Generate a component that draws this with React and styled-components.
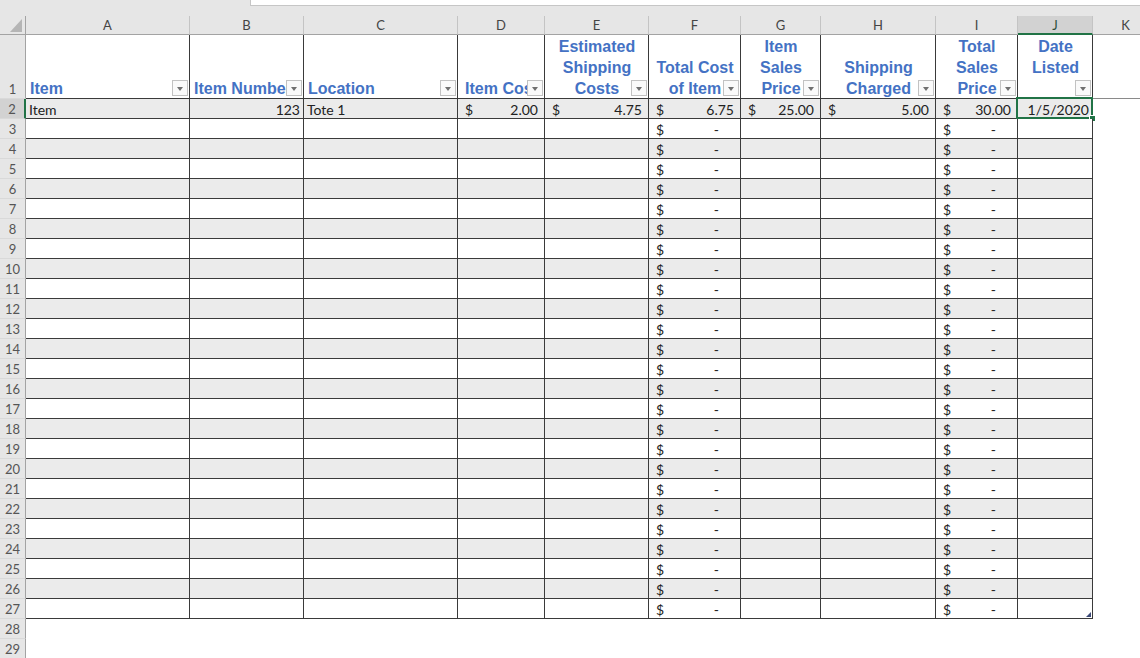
import React from "react";
import styled, { createGlobalStyle, css } from "styled-components";

const GREEN = "#217346";
const LINE = "#3a3a3a";
const HEAD_BG = "#e6e6e6";
const HEAD_LINE = "#a3a3a3";
const BAND = "#ebebeb";
const BLUE = "#4472c4";

const Global = createGlobalStyle`
  html, body { margin: 0; padding: 0; background: #ffffff; overflow: hidden; }
  body { font-family: Lato, "Open Sans", sans-serif; }
`;

const COLS = [
  { key: "A", w: 164 },
  { key: "B", w: 114 },
  { key: "C", w: 154 },
  { key: "D", w: 87 },
  { key: "E", w: 104 },
  { key: "F", w: 92 },
  { key: "G", w: 80 },
  { key: "H", w: 115 },
  { key: "I", w: 82 },
  { key: "J", w: 75 },
];

const HEADERS = [
  { lines: ["Item"], align: "left" },
  { lines: ["Item Number"], align: "left" },
  { lines: ["Location"], align: "left" },
  { lines: ["Item Cost"], align: "center" },
  { lines: ["Estimated", "Shipping", "Costs"], align: "center" },
  { lines: ["Total Cost", "of Item"], align: "center" },
  { lines: ["Item", "Sales", "Price"], align: "center" },
  { lines: ["Shipping", "Charged"], align: "center" },
  { lines: ["Total", "Sales", "Price"], align: "center" },
  { lines: ["Date", "Listed", "\u00a0"], align: "center" },
];

const FIRST_ROW = [
  { type: "text", value: "Item", align: "left" },
  { type: "text", value: "123", align: "right" },
  { type: "text", value: "Tote 1", align: "left" },
  { type: "money", value: "2.00" },
  { type: "money", value: "4.75" },
  { type: "money", value: "6.75" },
  { type: "money", value: "25.00" },
  { type: "money", value: "5.00" },
  { type: "money", value: "30.00" },
  { type: "text", value: "1/5/2020", align: "right", selected: true },
];

const Page = styled.div`
  width: 1140px;
  height: 658px;
  overflow: hidden;
  background: #ffffff;
  display: flex;
  flex-direction: column;
`;

const TopStrip = styled.div`
  height: 16px;
  background: ${HEAD_BG};
  display: flex;
  flex-shrink: 0;
`;

const FormulaEdge = styled.div`
  margin-left: 250px;
  flex: 1;
  height: 5px;
  background: #ffffff;
  border-left: 1px solid #c6c6c6;
  border-bottom: 1px solid #c6c6c6;
`;

const Sheet = styled.div`
  display: grid;
  grid-template-columns: 26px ${COLS.map((c) => `${c.w}px`).join(" ")} 66px;
  grid-template-rows: 19px 64px repeat(28, 20px);
  font-family: Lato, "Open Sans", sans-serif;
  font-size: 14px;
  color: #222;
`;

const Corner = styled.div`
  background: ${HEAD_BG};
  border-right: 1px solid ${HEAD_LINE};
  border-bottom: 1px solid ${HEAD_LINE};
  box-sizing: border-box;
  display: flex;
  align-items: flex-end;
  justify-content: flex-end;
  padding: 0 3px 2px 0;
`;

const ColHead = styled.div`
  box-sizing: border-box;
  background: ${(p) => (p.$active ? "#d2d2d2" : HEAD_BG)};
  border-right: 1px solid ${(p) => (p.$last ? "transparent" : "#c4c4c4")};
  border-bottom: ${(p) => (p.$active ? `2px solid ${GREEN}` : `1px solid ${HEAD_LINE}`)};
  color: ${(p) => (p.$active ? "#2e4f3a" : "#444")};
  font-size: 13px;
  line-height: 19px;
  text-align: center;
`;

const RowHead = styled.div`
  box-sizing: border-box;
  background: ${(p) => (p.$active ? "#d2d2d2" : HEAD_BG)};
  border-right: ${(p) => (p.$active ? `2px solid ${GREEN}` : `1px solid ${HEAD_LINE}`)};
  border-bottom: 1px solid #d9d9d9;
  color: #555;
  font-size: 13px;
  display: flex;
  align-items: flex-end;
  justify-content: center;
  line-height: 18px;
`;

const HeaderCell = styled.div`
  position: relative;
  box-sizing: border-box;
  border-right: 1px solid ${LINE};
  border-bottom: 1px solid ${LINE};
  background: #ffffff;
  overflow: hidden;
  display: flex;
  flex-direction: column;
  justify-content: flex-end;
  padding: 0 3px 0 4px;
  font-family: "Liberation Sans", Arial, sans-serif;
  font-weight: bold;
  font-size: 16px;
  line-height: 21px;
  color: ${BLUE};
  text-align: ${(p) => p.$align};
  white-space: nowrap;
`;

const HeaderText = styled.div`
  margin-bottom: -1px;
`;

const HeaderLine = styled.span`
  display: block;
`;

const FilterButton = styled.span`
  position: absolute;
  right: 1px;
  bottom: 2px;
  width: 16px;
  height: 16px;
  box-sizing: border-box;
  background: #fafafa;
  border: 1px solid #c2c2c2;
  display: flex;
  align-items: center;
  justify-content: center;
  &::after {
    content: "";
    border-left: 3.5px solid transparent;
    border-right: 3.5px solid transparent;
    border-top: 4px solid #707070;
    margin-top: 1px;
  }
`;

const Cell = styled.div`
  position: relative;
  box-sizing: border-box;
  border-right: 1px solid ${LINE};
  border-bottom: 1px solid ${LINE};
  background: ${(p) => (p.$band ? BAND : "#ffffff")};
  line-height: 21px;
  padding: 0 3px;
  text-align: ${(p) => p.$align || "left"};
  white-space: nowrap;
  ${(p) =>
    p.$selected &&
    css`
      &::before {
        content: "";
        position: absolute;
        left: -2px;
        top: -2px;
        right: -1px;
        bottom: -1px;
        border: 2px solid ${GREEN};
        pointer-events: none;
      }
      &::after {
        content: "";
        position: absolute;
        right: -4px;
        bottom: -4px;
        width: 5px;
        height: 5px;
        background: ${GREEN};
        border: 1px solid #ffffff;
      }
    `}
  ${(p) =>
    p.$corner &&
    css`
      &::after {
        content: "";
        position: absolute;
        right: 1px;
        bottom: 1px;
        border-left: 5px solid transparent;
        border-bottom: 5px solid #3d4b78;
      }
    `}
`;

const MoneyCell = styled(Cell)`
  display: flex;
  justify-content: space-between;
  padding: 0 6px 0 7px;
`;

const Dash = styled.span`
  margin-right: 15px;
`;

const Blank = styled.div`
  box-sizing: border-box;
  background: #ffffff;
  border-bottom: ${(p) => (p.$rule ? "1px solid #8a8a8a" : "none")};
`;

function CornerMark() {
  return (
    <svg width="12" height="13" viewBox="0 0 12 13">
      <polygon points="12,0 12,13 0,13" fill="#b5b5b5" />
    </svg>
  );
}

function Money({ value, band }) {
  return (
    <MoneyCell $band={band}>
      <span>$</span>
      {value ? <span>{value}</span> : <Dash>-</Dash>}
    </MoneyCell>
  );
}

function DataRow({ row }) {
  const band = row % 2 === 0;
  const last = row === 27;
  return (
    <>
      <RowHead $active={row === 2}>{row}</RowHead>
      {COLS.map((c, i) => {
        const k = `${row}-${c.key}`;
        if (row === 2) {
          const d = FIRST_ROW[i];
          if (d.type === "money") return <Money key={k} value={d.value} band />;
          return (
            <Cell key={k} $band $align={d.align} $selected={d.selected}>
              {d.value}
            </Cell>
          );
        }
        if (c.key === "F" || c.key === "I") return <Money key={k} band={band} />;
        return <Cell key={k} $band={band} $corner={last && c.key === "J"} />;
      })}
      <Blank />
    </>
  );
}

export default function App() {
  const rows = [];
  for (let r = 2; r <= 27; r++) rows.push(<DataRow key={r} row={r} />);
  return (
    <Page>
      <Global />
      <TopStrip>
        <FormulaEdge />
      </TopStrip>
      <Sheet>
        <Corner>
          <CornerMark />
        </Corner>
        {COLS.map((c) => (
          <ColHead key={c.key} $active={c.key === "J"}>
            {c.key}
          </ColHead>
        ))}
        <ColHead $last>K</ColHead>

        <RowHead>1</RowHead>
        {HEADERS.map((h, i) => (
          <HeaderCell key={i} $align={h.align}>
            <HeaderText>
              {h.lines.map((l, j) => (
                <HeaderLine key={j}>{l}</HeaderLine>
              ))}
            </HeaderText>
            <FilterButton />
          </HeaderCell>
        ))}
        <Blank $rule />

        {rows}

        {[28, 29].map((r) => (
          <React.Fragment key={r}>
            <RowHead>{r}</RowHead>
            {COLS.map((c) => (
              <Blank key={c.key} />
            ))}
            <Blank />
          </React.Fragment>
        ))}
      </Sheet>
    </Page>
  );
}
